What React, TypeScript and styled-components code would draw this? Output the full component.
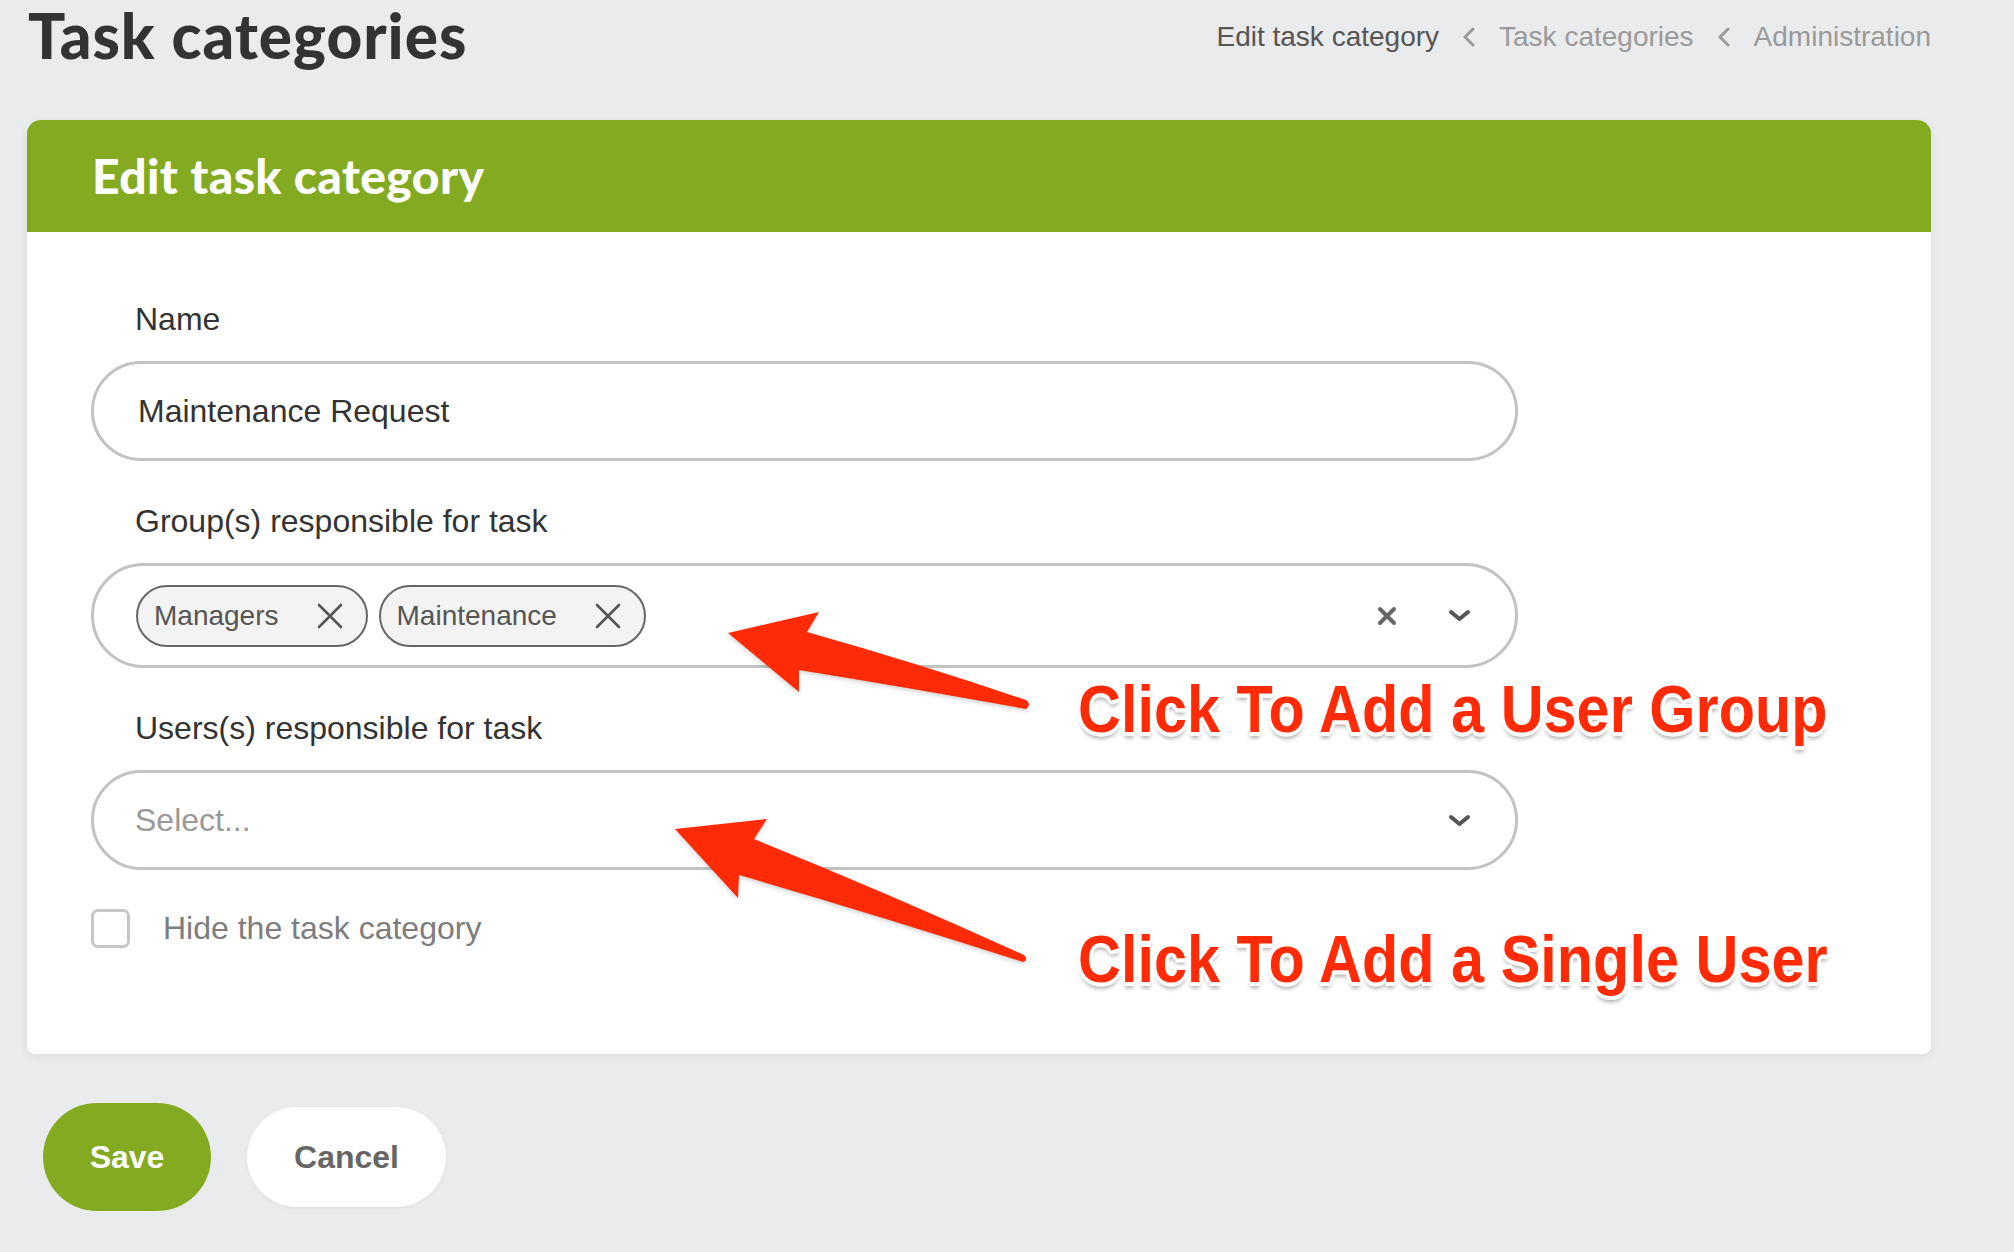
import React from "react";
import styled, { createGlobalStyle } from "styled-components";

const GREEN = "#83aa21";
const ANNOTATION_RED = "#ff2b06";

const GlobalStyle = createGlobalStyle`
  html, body {
    margin: 0;
    padding: 0;
    background: #eaebed;
  }
  body {
    font-family: "Liberation Sans", Arial, sans-serif;
    color: #333;
  }
  * {
    box-sizing: border-box;
  }
`;

const Page = styled.div`
  position: relative;
  width: 2014px;
  min-height: 1252px;
  padding: 0 83px 0 27px;
`;

const TopBar = styled.header`
  display: flex;
  justify-content: space-between;
  align-items: flex-start;
  height: 120px;
`;

const PageTitle = styled.h1`
  margin: 3px 0 0 1px;
  font-family: Lato, "Open Sans", sans-serif;
  font-weight: 900;
  font-size: 62px;
  line-height: 64px;
  letter-spacing: 1px;
  color: #333;
`;

const Breadcrumbs = styled.nav`
  display: flex;
  align-items: center;
  gap: 23px;
  margin-top: 21px;
  font-size: 28px;
  line-height: 32px;
`;

const Crumb = styled.span<{ $current?: boolean }>`
  color: ${(p) => (p.$current ? "#555" : "#9a9a9a")};
`;

const Card = styled.section`
  background: #fff;
  border-radius: 14px 14px 8px 8px;
  box-shadow: 0 2px 10px rgba(0, 0, 0, 0.06);
  overflow: hidden;
`;

const CardHeader = styled.h2`
  margin: 0;
  height: 112px;
  padding-left: 65px;
  background: ${GREEN};
  color: #fff;
  font-family: Lato, "Open Sans", sans-serif;
  font-weight: 900;
  font-size: 48px;
  line-height: 112px;
  letter-spacing: 0.4px;
`;

const CardBody = styled.div`
  display: flex;
  flex-direction: column;
  padding: 69px 0 106px 64px;
`;

const Field = styled.div<{ $gap?: number }>`
  display: flex;
  flex-direction: column;
  width: 1427px;
  margin-bottom: ${(p) => p.$gap ?? 42}px;
`;

const Label = styled.label`
  padding-left: 44px;
  margin-bottom: 24px;
  font-size: 32px;
  line-height: 36px;
  color: #333;
`;

const TextInput = styled.input`
  height: 100px;
  width: 100%;
  padding: 0 44px;
  border: 3px solid #c2c2c2;
  border-radius: 50px;
  background: #fff;
  font-family: "Liberation Sans", Arial, sans-serif;
  font-size: 32px;
  color: #333;
  outline: none;
`;

const SelectBox = styled.div<{ $height: number; $padLeft: number }>`
  display: flex;
  align-items: center;
  height: ${(p) => p.$height}px;
  padding: 0 44px 0 ${(p) => p.$padLeft}px;
  border: 3px solid #c2c2c2;
  border-radius: 60px;
  background: #fff;
`;

const ChipList = styled.div`
  display: flex;
  gap: 11px;
`;

const Chip = styled.span`
  display: inline-flex;
  align-items: center;
  gap: 38px;
  height: 62px;
  padding: 0 23px 0 16px;
  border: 2px solid #666;
  border-radius: 31px;
  background: #f3f3f3;
  font-size: 28px;
  color: #555;
`;

const Placeholder = styled.span`
  font-size: 32px;
  color: #999;
`;

const Indicators = styled.div`
  display: flex;
  align-items: center;
  gap: 51px;
  margin-left: auto;
`;

const CheckRow = styled.div`
  display: flex;
  align-items: center;
  gap: 33px;
`;

const CheckBox = styled.span`
  width: 39px;
  height: 39px;
  border: 3px solid #c6c6c6;
  border-radius: 7px;
  background: #fff;
`;

const CheckLabel = styled.span`
  font-size: 32px;
  color: #7d7d7d;
`;

const ButtonRow = styled.div`
  display: flex;
  align-items: center;
  gap: 36px;
  margin-top: 49px;
  padding-left: 16px;
`;

const Button = styled.button<{ $primary?: boolean }>`
  display: flex;
  align-items: center;
  justify-content: center;
  width: ${(p) => (p.$primary ? 168 : 199)}px;
  height: ${(p) => (p.$primary ? 108 : 100)}px;
  border: none;
  border-radius: 54px;
  background: ${(p) => (p.$primary ? GREEN : "#fff")};
  color: ${(p) => (p.$primary ? "#fff" : "#666")};
  box-shadow: ${(p) => (p.$primary ? "none" : "0 1px 4px rgba(0,0,0,0.05)")};
  font-family: "Liberation Sans", Arial, sans-serif;
  font-weight: 700;
  font-size: 32px;
  cursor: pointer;
`;

/* Callouts drawn over the form */
const Overlay = styled.svg`
  position: absolute;
  left: 0;
  top: 0;
  pointer-events: none;
  filter: drop-shadow(0 2px 2px rgba(0, 0, 0, 0.18));
`;

const Callout = styled.div<{ $top: number }>`
  position: absolute;
  left: 1078px;
  top: ${(p) => p.$top}px;
  transform: scaleX(0.887);
  transform-origin: left top;
  white-space: nowrap;
  font-family: "Liberation Sans", Arial, sans-serif;
  font-weight: 700;
  font-size: 67px;
  line-height: 67px;
  color: ${ANNOTATION_RED};
  text-shadow:
    3px 0 0 #fff, -3px 0 0 #fff, 0 3px 0 #fff, 0 -3px 0 #fff,
    2px 2px 0 #fff, -2px 2px 0 #fff, 2px -2px 0 #fff, -2px -2px 0 #fff,
    4px 1px 0 #fff, -4px 1px 0 #fff, 1px 4px 0 #fff, -1px 4px 0 #fff,
    1px -4px 0 #fff, -1px -4px 0 #fff, 4px -1px 0 #fff, -4px -1px 0 #fff,
    0 6px 5px rgba(0, 0, 0, 0.35);
`;

const ChevronLeft = () => (
  <svg width="14" height="20" viewBox="0 0 14 20">
    <path d="M11 2 L3 10 L11 18" fill="none" stroke="#9a9a9a" strokeWidth="3" strokeLinecap="round" strokeLinejoin="round" />
  </svg>
);

const ThinX = () => (
  <svg width="26" height="26" viewBox="0 0 26 26">
    <path d="M2 2 L24 24 M24 2 L2 24" stroke="#555" strokeWidth="2.6" strokeLinecap="round" />
  </svg>
);

const ClearX = () => (
  <svg width="20" height="20" viewBox="0 0 20 20">
    <path d="M3 3 L17 17 M17 3 L3 17" stroke="#666" strokeWidth="4" strokeLinecap="round" />
  </svg>
);

const ChevronDown = () => (
  <svg width="23" height="13" viewBox="0 0 23 13">
    <path d="M3 3 L11.5 10 L20 3" fill="none" stroke="#555" strokeWidth="4" strokeLinecap="round" strokeLinejoin="round" />
  </svg>
);

export default function App() {
  return (
    <>
      <GlobalStyle />
      <Page>
        <TopBar>
          <PageTitle>Task categories</PageTitle>
          <Breadcrumbs>
            <Crumb $current>Edit task category</Crumb>
            <ChevronLeft />
            <Crumb>Task categories</Crumb>
            <ChevronLeft />
            <Crumb>Administration</Crumb>
          </Breadcrumbs>
        </TopBar>

        <Card>
          <CardHeader>Edit task category</CardHeader>
          <CardBody>
            <Field>
              <Label>Name</Label>
              <TextInput defaultValue="Maintenance Request" readOnly />
            </Field>

            <Field>
              <Label>Group(s) responsible for task</Label>
              <SelectBox $height={105} $padLeft={42}>
                <ChipList>
                  <Chip>
                    Managers
                    <ThinX />
                  </Chip>
                  <Chip>
                    Maintenance
                    <ThinX />
                  </Chip>
                </ChipList>
                <Indicators>
                  <ClearX />
                  <ChevronDown />
                </Indicators>
              </SelectBox>
            </Field>

            <Field $gap={39}>
              <Label>Users(s) responsible for task</Label>
              <SelectBox $height={100} $padLeft={41}>
                <Placeholder>Select...</Placeholder>
                <Indicators>
                  <ChevronDown />
                </Indicators>
              </SelectBox>
            </Field>

            <CheckRow>
              <CheckBox />
              <CheckLabel>Hide the task category</CheckLabel>
            </CheckRow>
          </CardBody>
        </Card>

        <ButtonRow>
          <Button $primary>Save</Button>
          <Button>Cancel</Button>
        </ButtonRow>

        <Overlay width="2014" height="1252" viewBox="0 0 2014 1252">
          <path
            d="M728 633 L819 612 L807 632 Q920 664 1026 700 Q1032 704 1026 709 Q910 688 799 670 L799 692 Z"
            fill={ANNOTATION_RED}
          />
          <path
            d="M675 829 L767 819 L754 839 Q890 894 1024 955 Q1029 960 1023 962 Q880 916 739 875 L738 898 Z"
            fill={ANNOTATION_RED}
          />
        </Overlay>
        <Callout $top={675}>Click To Add a User Group</Callout>
        <Callout $top={925}>Click To Add a Single User</Callout>
      </Page>
    </>
  );
}
